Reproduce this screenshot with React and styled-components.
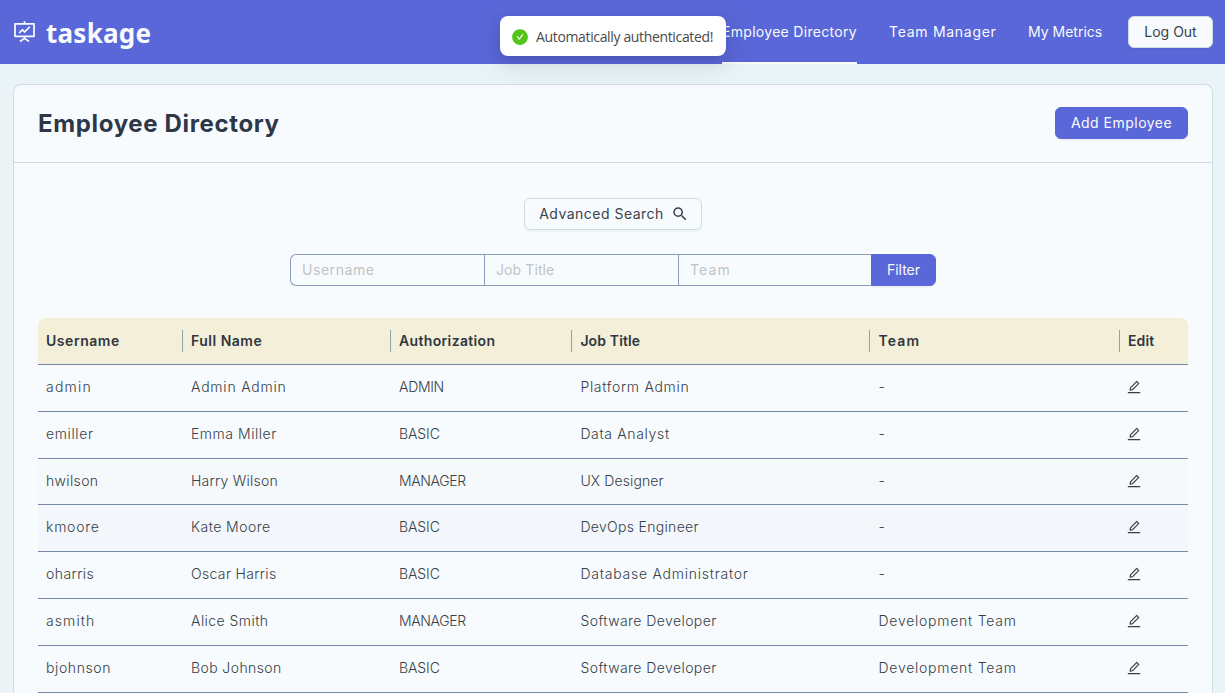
import React from "react";
import styled, { createGlobalStyle } from "styled-components";
import {
  AiFillCheckCircle,
  AiOutlineEdit,
  AiOutlineFundProjectionScreen,
} from "react-icons/ai";
import { MdSearch } from "react-icons/md";

const GlobalStyle = createGlobalStyle`
  *, *::before, *::after { box-sizing: border-box; }
  html, body { margin: 0; }
  body {
    background: #eaf3f6;
    color: #2d3748;
    font: 400 14px/22px Inter, "Open Sans", sans-serif;
  }
`;

const Page = styled.div`
  display: flex;
  flex-direction: column;
  height: 693px;
  overflow: hidden;
`;

const Header = styled.header`
  display: flex;
  flex: none;
  align-items: center;
  justify-content: space-between;
  height: 64px;
  padding: 0 12px;
  background: #5a67d8;
  color: #f7fbfd;
`;

const Brand = styled.div`
  display: flex;
  align-items: center;
  gap: 9px;
  padding-top: 2px;
  font: 700 26px/32px "Noto Sans", sans-serif;
  letter-spacing: 0.25px;

  svg { font-size: 25px; margin-top: -3px; }
`;

const Nav = styled.nav`
  display: flex;
  align-items: center;
  height: 100%;
  gap: 32px;
`;

const NavItem = styled.a`
  width: ${(p) => p.$width}px;
  height: 64px;
  line-height: 63px;
  white-space: nowrap;
  letter-spacing: ${(p) => p.$track || 0}px;
  border-bottom: 2px solid ${(p) => (p.$active ? "#f7fbfd" : "transparent")};
`;

const Button = styled.button`
  display: flex;
  align-items: center;
  justify-content: center;
  flex: none;
  gap: 7px;
  width: ${(p) => p.$width}px;
  height: 32px;
  padding: 0 0 1px;
  font: inherit;
  white-space: nowrap;
  letter-spacing: ${(p) => p.$track || 0}px;
  border: 1px solid ${(p) => (p.$primary ? "#5a67d8" : "#cddde4")};
  border-radius: ${(p) => (p.$joined ? "0 6px 6px 0" : "6px")};
  background: ${(p) => (p.$primary ? "#5a67d8" : "#f7fbfd")};
  color: ${(p) => (p.$primary ? "#f7fbfd" : "#3a424c")};
  box-shadow: 0 2px 0 rgba(5, 60, 90, 0.04);

  svg { font-size: 18px; margin-right: -2px; }
`;

const LogOut = styled(Button)`
  margin-left: -6px;
`;

const Card = styled.main`
  flex: 1;
  min-height: 0;
  margin: 20px 12px 0 13px;
  border: 1px solid #cddde4;
  border-bottom: 0;
  border-radius: 8px 8px 0 0;
  background: #f7fbfd;
`;

const CardHead = styled.div`
  display: flex;
  align-items: center;
  justify-content: space-between;
  height: 78px;
  padding: 0 24px 1px;
  border-bottom: 1px solid #cddde4;
`;

const Title = styled.h1`
  margin: 0;
  padding-top: 2px;
  font-size: 24px;
  font-weight: 700;
  line-height: 32px;
  letter-spacing: 0.65px;
`;

const CardBody = styled.div`
  display: flex;
  flex-direction: column;
  align-items: center;
  padding: 35px 24px 0;
`;

const FilterBar = styled.form`
  display: flex;
  margin: 24px 0 32px;
  height: 32px;
`;

const Field = styled.input`
  width: ${(p) => p.$width}px;
  height: 32px;
  padding: 0 11px 2px;
  font: inherit;
  letter-spacing: ${(p) => p.$track}px;
  border: 1px solid #8d9dbb;
  border-right: 0;
  border-radius: 0;
  background: transparent;
  outline: 0;

  &:first-child { border-radius: 6px 0 0 6px; }
  &::placeholder { color: #bfc3c7; opacity: 1; }
`;

const Table = styled.div`
  width: 100%;
`;

const Row = styled.div`
  display: grid;
  grid-template-columns: 145px 208px 181.4px 298.1px 249.5px 68px;
  align-items: center;
  height: 46.8px;
  padding-bottom: 1.6px;
  border-bottom: 1px solid #7888aa;
  background: ${(p) => p.$tint || "transparent"};
`;

const HeadRow = styled(Row)`
  height: 47px;
  padding-bottom: 0;
  background: #f4efd8;
  border-radius: 8px 8px 0 0;
`;

const Cell = styled.div`
  display: flex;
  align-items: center;
  height: 22px;
  padding-left: 8px;
  color: #363e47;
  font-weight: 360;
  white-space: nowrap;
  letter-spacing: ${(p) => p.$track || 0}px;
`;

const EditCell = styled(Cell)`
  padding-left: 6px;

  svg { font-size: 16px; }
`;

const HeadCell = styled(Cell)`
  color: #2f3740;
  font-weight: 600;
  border-right: 1px solid #91a1b3;

  &:last-child { border-right: 0; }
`;

const Toast = styled.div`
  position: absolute;
  top: 16px;
  left: 500px;
  display: flex;
  align-items: center;
  gap: 7px;
  width: 226px;
  height: 40px;
  padding: 1px 12px 0 11px;
  border-radius: 8px;
  background: #fff;
  color: #4a4a4a;
  font-family: "Open Sans", "Noto Sans", sans-serif;
  white-space: nowrap;
  letter-spacing: -0.35px;
  box-shadow: 0 6px 16px rgba(0, 0, 0, 0.08), 0 3px 6px -4px rgba(0, 0, 0, 0.12),
    0 9px 28px 8px rgba(0, 0, 0, 0.05);

  svg { flex: none; font-size: 18px; color: #52c41a; }
`;

/* Each label is paired with its letter spacing in pixels. */
const columns = [
  ["Username", 0.55],
  ["Full Name", 0.5],
  ["Authorization", 0.35],
  ["Job Title", 0.12],
  ["Team", 1.1],
  ["Edit", 0.15],
];

const basic = ["BASIC", -0.1];
const manager = ["MANAGER", -0.35];
const developer = ["Software Developer", 0.42];
const devTeam = ["Development Team", 0.75];
const noTeam = ["-", 0];

const employees = [
  [["admin", 1.25], ["Admin Admin", 0.78], ["ADMIN", -0.3], ["Platform Admin", 0.7], noTeam],
  [["emiller", 0.62], ["Emma Miller", 0.53], basic, ["Data Analyst", 0.65], noTeam],
  [["hwilson", 0.35], ["Harry Wilson", 0.25], manager, ["UX Designer", 0.12], noTeam],
  [["kmoore", 0.75], ["Kate Moore", 0.45], basic, ["DevOps Engineer", 0.32], noTeam],
  [["oharris", 0.45], ["Oscar Harris", 0.35], basic, ["Database Administrator", 0.76], noTeam],
  [["asmith", 1.1], ["Alice Smith", 0.45], manager, developer, devTeam],
  [["bjohnson", 0.6], ["Bob Johnson", 0.4], basic, developer, devTeam],
];

const tints = { hwilson: "#f5f9fb", kmoore: "#f3f7fb" };

export default function App() {
  return (
    <Page>
      <GlobalStyle />
      <Header>
        <Brand>
          <AiOutlineFundProjectionScreen />
          taskage
        </Brand>
        <Nav>
          <NavItem $width={135} $track={0.3} $active>Employee Directory</NavItem>
          <NavItem $width={107} $track={0.72}>Team Manager</NavItem>
          <NavItem $width={74}>My Metrics</NavItem>
          <LogOut $width={85}>Log Out</LogOut>
        </Nav>
      </Header>
      <Card>
        <CardHead>
          <Title>Employee Directory</Title>
          <Button $primary $width={133} $track={0.48}>Add Employee</Button>
        </CardHead>
        <CardBody>
          <Button $width={178} $track={0.48}>
            Advanced Search <MdSearch />
          </Button>
          <FilterBar>
            <Field $width={194} $track={0.55} placeholder="Username" />
            <Field $width={194} $track={0.1} placeholder="Job Title" />
            <Field $width={193} $track={1.1} placeholder="Team" />
            <Button type="button" $primary $joined $width={65}>Filter</Button>
          </FilterBar>
          <Table>
            <HeadRow>
              {columns.map(([name, track]) => (
                <HeadCell key={name} $track={track}>{name}</HeadCell>
              ))}
            </HeadRow>
            {employees.map((employee) => (
              <Row key={employee[0][0]} $tint={tints[employee[0][0]]}>
                {employee.map(([value, track], i) => (
                  <Cell key={i} $track={track}>{value}</Cell>
                ))}
                <EditCell>
                  <AiOutlineEdit />
                </EditCell>
              </Row>
            ))}
          </Table>
        </CardBody>
      </Card>
      <Toast>
        <AiFillCheckCircle />
        Automatically authenticated!
      </Toast>
    </Page>
  );
}
